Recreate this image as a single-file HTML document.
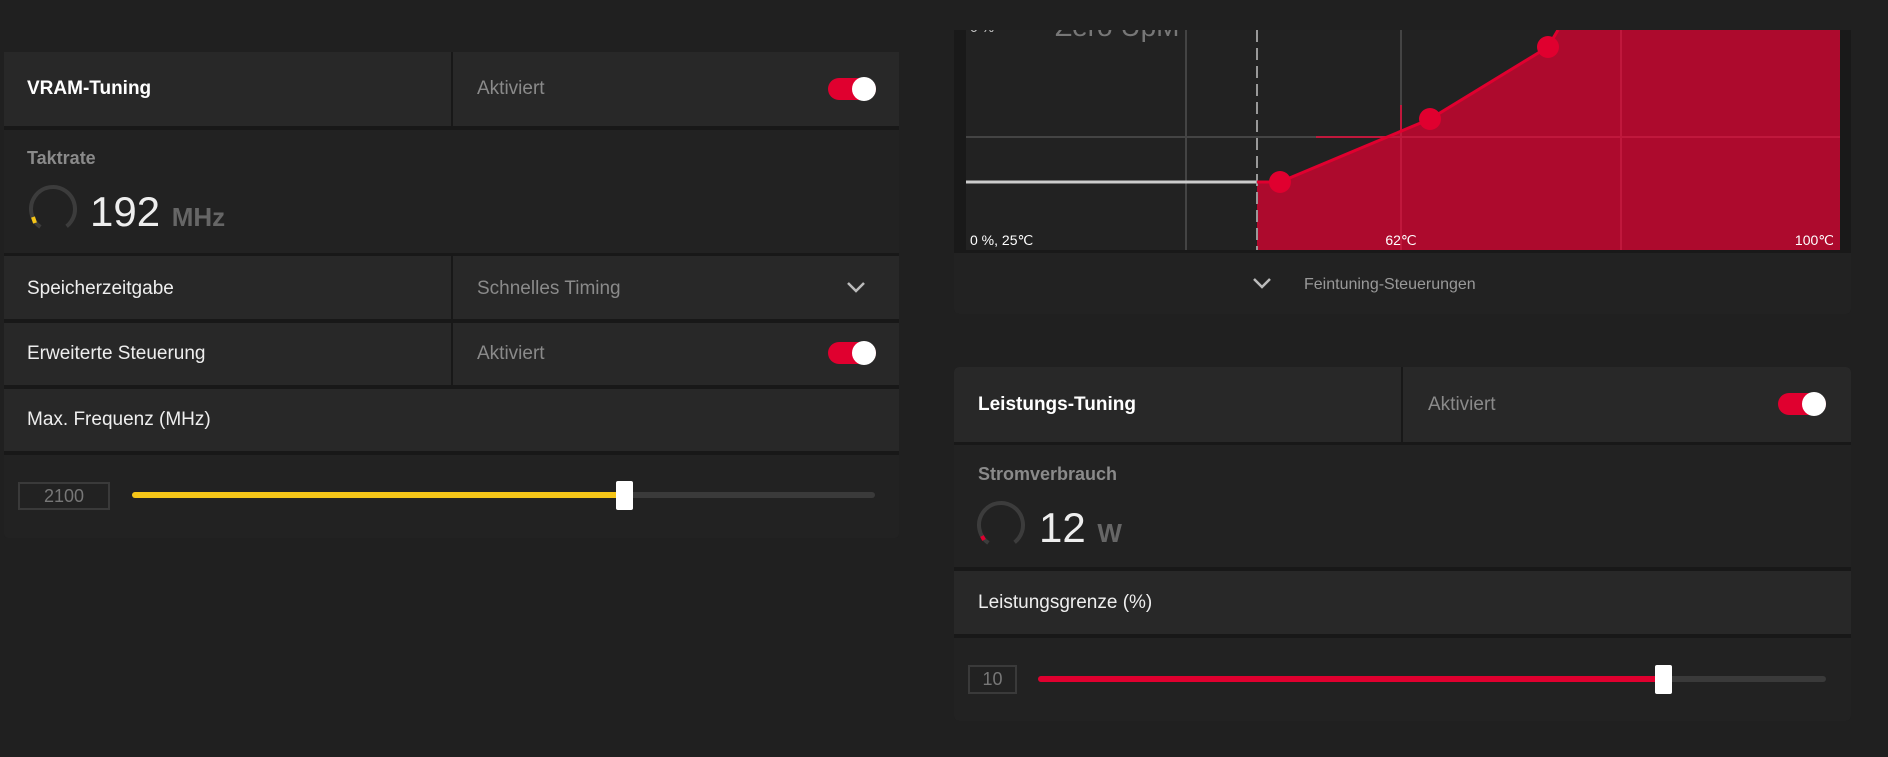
<!DOCTYPE html>
<html><head><meta charset="utf-8"><style>
*{box-sizing:border-box;margin:0;padding:0}
body{width:1888px;height:757px;background:#202020;font-family:"Liberation Sans",sans-serif;position:relative;overflow:hidden;color:#fff}
.a{position:absolute}
.c{background:#282828;position:absolute}
.d{background:#222;position:absolute}
.t{position:absolute;font-size:19px;color:#eee}
.g{color:#8a8a8a}
.tog{position:absolute;width:48px;height:22px;border-radius:11px;background:#e0002f}
.tog:after{content:"";position:absolute;right:0;top:-1px;width:24px;height:24px;border-radius:50%;background:#fff}
.box{position:absolute;border:2px solid #3a3a3a;color:#777;font-size:18px;text-align:center}
</style></head><body>
<!-- left panel -->
<div class="a" style="left:4px;top:52px;width:895px;height:486px;background:#181818;border-radius:4px"></div>
<div class="c" style="left:4px;top:52px;width:447px;height:74px"></div>
<div class="c" style="left:453px;top:52px;width:446px;height:74px"></div>
<div class="t" style="left:27px;top:78px;font-weight:bold;color:#fff">VRAM-Tuning</div>
<div class="t g" style="left:477px;top:78px">Aktiviert</div>
<div class="tog" style="left:828px;top:78px"></div>
<div class="d" style="left:4px;top:130px;width:895px;height:123px"></div>
<div class="t g" style="left:27px;top:148px;font-weight:bold;font-size:18px">Taktrate</div>
<svg class="a" style="left:26px;top:182px" width="54" height="54"><circle cx="27" cy="27" r="22" fill="none" stroke="#3c3c3c" stroke-width="4" stroke-dasharray="110 29" transform="rotate(125 27 27)"/><path d="M7 35 L9 41" stroke="#f5c518" stroke-width="4"/></svg>
<div class="t" style="left:90px;top:188px;font-size:42px">192 <span style="font-size:26px;font-weight:bold;color:#666">MHz</span></div>
<div class="c" style="left:4px;top:256px;width:447px;height:63px"></div>
<div class="c" style="left:453px;top:256px;width:446px;height:63px"></div>
<div class="t" style="left:27px;top:278px">Speicherzeitgabe</div>
<div class="t g" style="left:477px;top:278px">Schnelles Timing</div>
<svg class="a" style="left:846px;top:281px" width="20" height="14"><path d="M2 2 L10 10 L18 2" fill="none" stroke="#bbb" stroke-width="2.5"/></svg>
<div class="c" style="left:4px;top:323px;width:447px;height:62px"></div>
<div class="c" style="left:453px;top:323px;width:446px;height:62px"></div>
<div class="t" style="left:27px;top:343px">Erweiterte Steuerung</div>
<div class="t g" style="left:477px;top:343px">Aktiviert</div>
<div class="tog" style="left:828px;top:342px"></div>
<div class="c" style="left:4px;top:389px;width:895px;height:62px"></div>
<div class="t" style="left:27px;top:409px">Max. Frequenz (MHz)</div>
<div class="d" style="left:4px;top:455px;width:895px;height:83px;border-radius:0 0 4px 4px"></div>
<div class="box" style="left:18px;top:482px;width:92px;height:28px;line-height:24px">2100</div>
<div class="a" style="left:132px;top:492px;width:743px;height:6px;background:#3a3a3a;border-radius:3px"></div>
<div class="a" style="left:132px;top:492px;width:493px;height:6px;background:#f5c518;border-radius:3px"></div>
<div class="a" style="left:616px;top:481px;width:17px;height:29px;background:#fff;border-radius:2px"></div>
<!-- chart panel -->
<div class="a" style="left:954px;top:30px;width:897px;height:284px;background:#191919;border-radius:0 0 5px 5px"></div>
<svg class="a" style="left:966px;top:30px" width="874" height="220">
<rect width="874" height="220" fill="#222"/>
<polygon points="291,152 314,152 464,89 582,17 592,0 874,0 874,220 291,220" fill="#ad0a2d"/>
<line x1="220" y1="0" x2="220" y2="220" stroke="#444" stroke-width="2"/>
<line x1="435" y1="0" x2="435" y2="220" stroke="#444" stroke-width="2"/>
<line x1="435" y1="75" x2="435" y2="220" stroke="#c0183c" stroke-width="2"/>
<line x1="655" y1="0" x2="655" y2="220" stroke="#c0183c" stroke-width="2"/>
<line x1="0" y1="107" x2="874" y2="107" stroke="#444" stroke-width="2"/>
<line x1="350" y1="107" x2="874" y2="107" stroke="#c0183c" stroke-width="2"/>
<line x1="0" y1="152" x2="291" y2="152" stroke="#ccc" stroke-width="3"/>
<line x1="291" y1="0" x2="291" y2="220" stroke="#999" stroke-width="2" stroke-dasharray="12 6"/>
<polyline points="291,152 314,152 464,89 582,17 592,0" fill="none" stroke="#e0002f" stroke-width="3"/>
<circle cx="314" cy="152" r="11" fill="#e0002f"/><circle cx="464" cy="89" r="11" fill="#e0002f"/><circle cx="582" cy="17" r="11" fill="#e0002f"/>
<text x="89" y="6" font-size="28" fill="#777" font-family="Liberation Sans">Zero UpM</text>
<text x="4" y="2" font-size="14" fill="#ccc" font-family="Liberation Sans">0 %</text>
<text x="4" y="215" font-size="14" fill="#fff" font-family="Liberation Sans">0 %, 25℃</text>
<text x="435" y="215" font-size="14" fill="#fff" text-anchor="middle" font-family="Liberation Sans">62℃</text>
<text x="868" y="215" font-size="14" fill="#fff" text-anchor="end" font-family="Liberation Sans">100℃</text>
</svg>
<div class="a" style="left:954px;top:253px;width:897px;height:61px;background:#222;border-radius:0 0 5px 5px"></div>
<svg class="a" style="left:1252px;top:277px" width="20" height="14"><path d="M2 2 L10 10 L18 2" fill="none" stroke="#bbb" stroke-width="2.5"/></svg>
<div class="t g" style="left:1304px;top:276px;font-size:16px;color:#999">Feintuning-Steuerungen</div>
<!-- power panel -->
<div class="a" style="left:954px;top:367px;width:897px;height:354px;background:#181818;border-radius:5px"></div>
<div class="c" style="left:954px;top:367px;width:447px;height:75px;border-radius:5px 0 0 0"></div>
<div class="c" style="left:1403px;top:367px;width:448px;height:75px;border-radius:0 5px 0 0"></div>
<div class="t" style="left:978px;top:394px;font-weight:bold;color:#fff">Leistungs-Tuning</div>
<div class="t g" style="left:1428px;top:394px">Aktiviert</div>
<div class="tog" style="left:1778px;top:393px"></div>
<div class="d" style="left:954px;top:445px;width:897px;height:122px"></div>
<div class="t g" style="left:978px;top:464px;font-weight:bold;font-size:18px">Stromverbrauch</div>
<svg class="a" style="left:974px;top:498px" width="54" height="54"><circle cx="27" cy="27" r="22" fill="none" stroke="#3c3c3c" stroke-width="4" stroke-dasharray="110 29" transform="rotate(125 27 27)"/><path d="M8 38 L10 42" stroke="#e0002f" stroke-width="4"/></svg>
<div class="t" style="left:1039px;top:504px;font-size:42px">12 <span style="font-size:26px;font-weight:bold;color:#666">W</span></div>
<div class="c" style="left:954px;top:571px;width:897px;height:63px"></div>
<div class="t" style="left:978px;top:592px">Leistungsgrenze (%)</div>
<div class="d" style="left:954px;top:638px;width:897px;height:83px;border-radius:0 0 5px 5px"></div>
<div class="box" style="left:968px;top:665px;width:49px;height:29px;line-height:25px">10</div>
<div class="a" style="left:1038px;top:676px;width:788px;height:6px;background:#3a3a3a;border-radius:3px"></div>
<div class="a" style="left:1038px;top:676px;width:626px;height:6px;background:#e0002f;border-radius:3px"></div>
<div class="a" style="left:1655px;top:665px;width:17px;height:29px;background:#fff;border-radius:2px"></div>
</body></html>
